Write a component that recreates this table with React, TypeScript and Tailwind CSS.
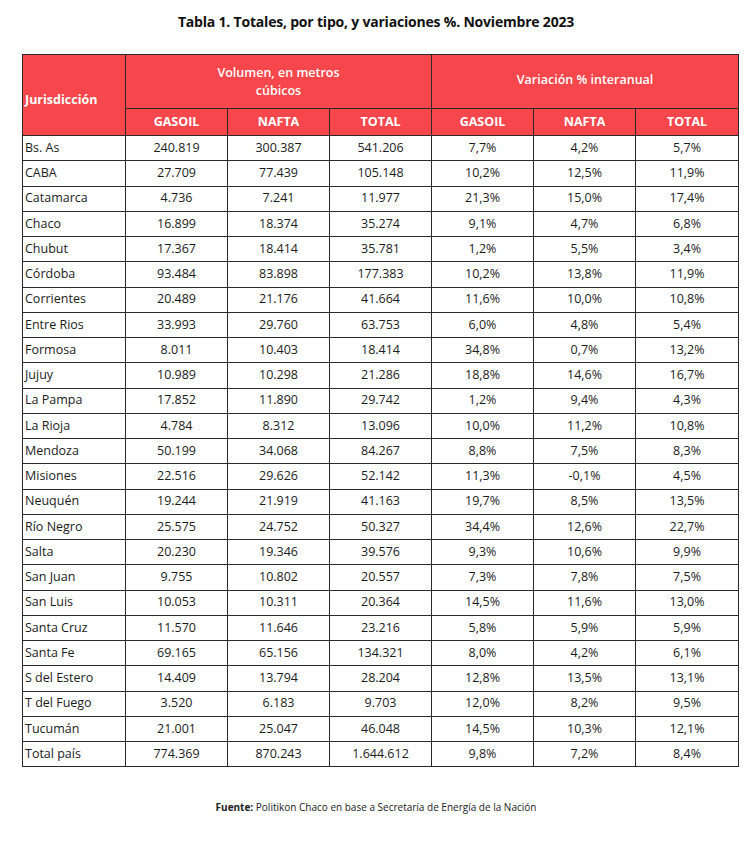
const rows: string[][] = [
  ["Bs. As", "240.819", "300.387", "541.206", "7,7%", "4,2%", "5,7%"],
  ["CABA", "27.709", "77.439", "105.148", "10,2%", "12,5%", "11,9%"],
  ["Catamarca", "4.736", "7.241", "11.977", "21,3%", "15,0%", "17,4%"],
  ["Chaco", "16.899", "18.374", "35.274", "9,1%", "4,7%", "6,8%"],
  ["Chubut", "17.367", "18.414", "35.781", "1,2%", "5,5%", "3,4%"],
  ["Córdoba", "93.484", "83.898", "177.383", "10,2%", "13,8%", "11,9%"],
  ["Corrientes", "20.489", "21.176", "41.664", "11,6%", "10,0%", "10,8%"],
  ["Entre Rios", "33.993", "29.760", "63.753", "6,0%", "4,8%", "5,4%"],
  ["Formosa", "8.011", "10.403", "18.414", "34,8%", "0,7%", "13,2%"],
  ["Jujuy", "10.989", "10.298", "21.286", "18,8%", "14,6%", "16,7%"],
  ["La Pampa", "17.852", "11.890", "29.742", "1,2%", "9,4%", "4,3%"],
  ["La Rioja", "4.784", "8.312", "13.096", "10,0%", "11,2%", "10,8%"],
  ["Mendoza", "50.199", "34.068", "84.267", "8,8%", "7,5%", "8,3%"],
  ["Misiones", "22.516", "29.626", "52.142", "11,3%", "-0,1%", "4,5%"],
  ["Neuquén", "19.244", "21.919", "41.163", "19,7%", "8,5%", "13,5%"],
  ["Río Negro", "25.575", "24.752", "50.327", "34,4%", "12,6%", "22,7%"],
  ["Salta", "20.230", "19.346", "39.576", "9,3%", "10,6%", "9,9%"],
  ["San Juan", "9.755", "10.802", "20.557", "7,3%", "7,8%", "7,5%"],
  ["San Luis", "10.053", "10.311", "20.364", "14,5%", "11,6%", "13,0%"],
  ["Santa Cruz", "11.570", "11.646", "23.216", "5,8%", "5,9%", "5,9%"],
  ["Santa Fe", "69.165", "65.156", "134.321", "8,0%", "4,2%", "6,1%"],
  ["S del Estero", "14.409", "13.794", "28.204", "12,8%", "13,5%", "13,1%"],
  ["T del Fuego", "3.520", "6.183", "9.703", "12,0%", "8,2%", "9,5%"],
  ["Tucumán", "21.001", "25.047", "46.048", "14,5%", "10,3%", "12,1%"],
  ["Total país", "774.369", "870.243", "1.644.612", "9,8%", "7,2%", "8,4%"],
];

const App = () => {
  return (
    <div className="w-[752px] h-[842px] bg-white text-[#1c1c1c] font-['Open_Sans',sans-serif]">
      <h1 className="pt-[11px] text-center text-[14px] font-bold tracking-[-0.2px] text-[#111]">
        Tabla 1. Totales, por tipo, y variaciones %. Noviembre 2023
      </h1>

      <table className="mt-[22px] ml-[22px] w-[716px] table-fixed border-collapse text-[12.5px]">
        <colgroup>
          <col className="w-[103px]" />
          <col className="w-[102px]" />
          <col className="w-[102px]" />
          <col className="w-[102px]" />
          <col className="w-[102px]" />
          <col className="w-[102px]" />
          <col className="w-[103px]" />
        </colgroup>
        <thead className="bg-[#f8474c] text-white font-bold">
          <tr className="h-[54px]">
            <th rowSpan={2} className="border border-[#2a2a2a] pl-[2px] pt-[10px] text-left text-[12.5px] font-bold">
              Jurisdicción
            </th>
            <th colSpan={3} className="border border-[#2a2a2a] text-[12.5px] font-semibold leading-[18px]">
              <span className="inline-block w-[130px]">Volumen, en metros cúbicos</span>
            </th>
            <th colSpan={3} className="border border-[#2a2a2a] pb-[3px] text-[12.5px] font-semibold">
              Variación % interanual
            </th>
          </tr>
          <tr className="h-[27px]">
            {["GASOIL", "NAFTA", "TOTAL", "GASOIL", "NAFTA", "TOTAL"].map((h, i) => (
              <th key={i} className="border border-[#2a2a2a] text-[12.5px] font-bold">
                {h}
              </th>
            ))}
          </tr>
        </thead>
        <tbody>
          {rows.map((r) => (
            <tr key={r[0]} className="h-[25.25px]">
              {r.map((c, i) => (
                <td
                  key={i}
                  className={
                    i === 0
                      ? "border border-[#2a2a2a] pl-[2px] text-left font-medium"
                      : "border border-[#2a2a2a] text-center font-medium"
                  }
                >
                  {c}
                </td>
              ))}
            </tr>
          ))}
        </tbody>
      </table>

      <p className="mt-[33px] text-center text-[10px] text-[#222]">
        <span className="font-bold">Fuente:</span> Politikon Chaco en base a Secretaría de Energía de la Nación
      </p>
    </div>
  );
};

export default App;
